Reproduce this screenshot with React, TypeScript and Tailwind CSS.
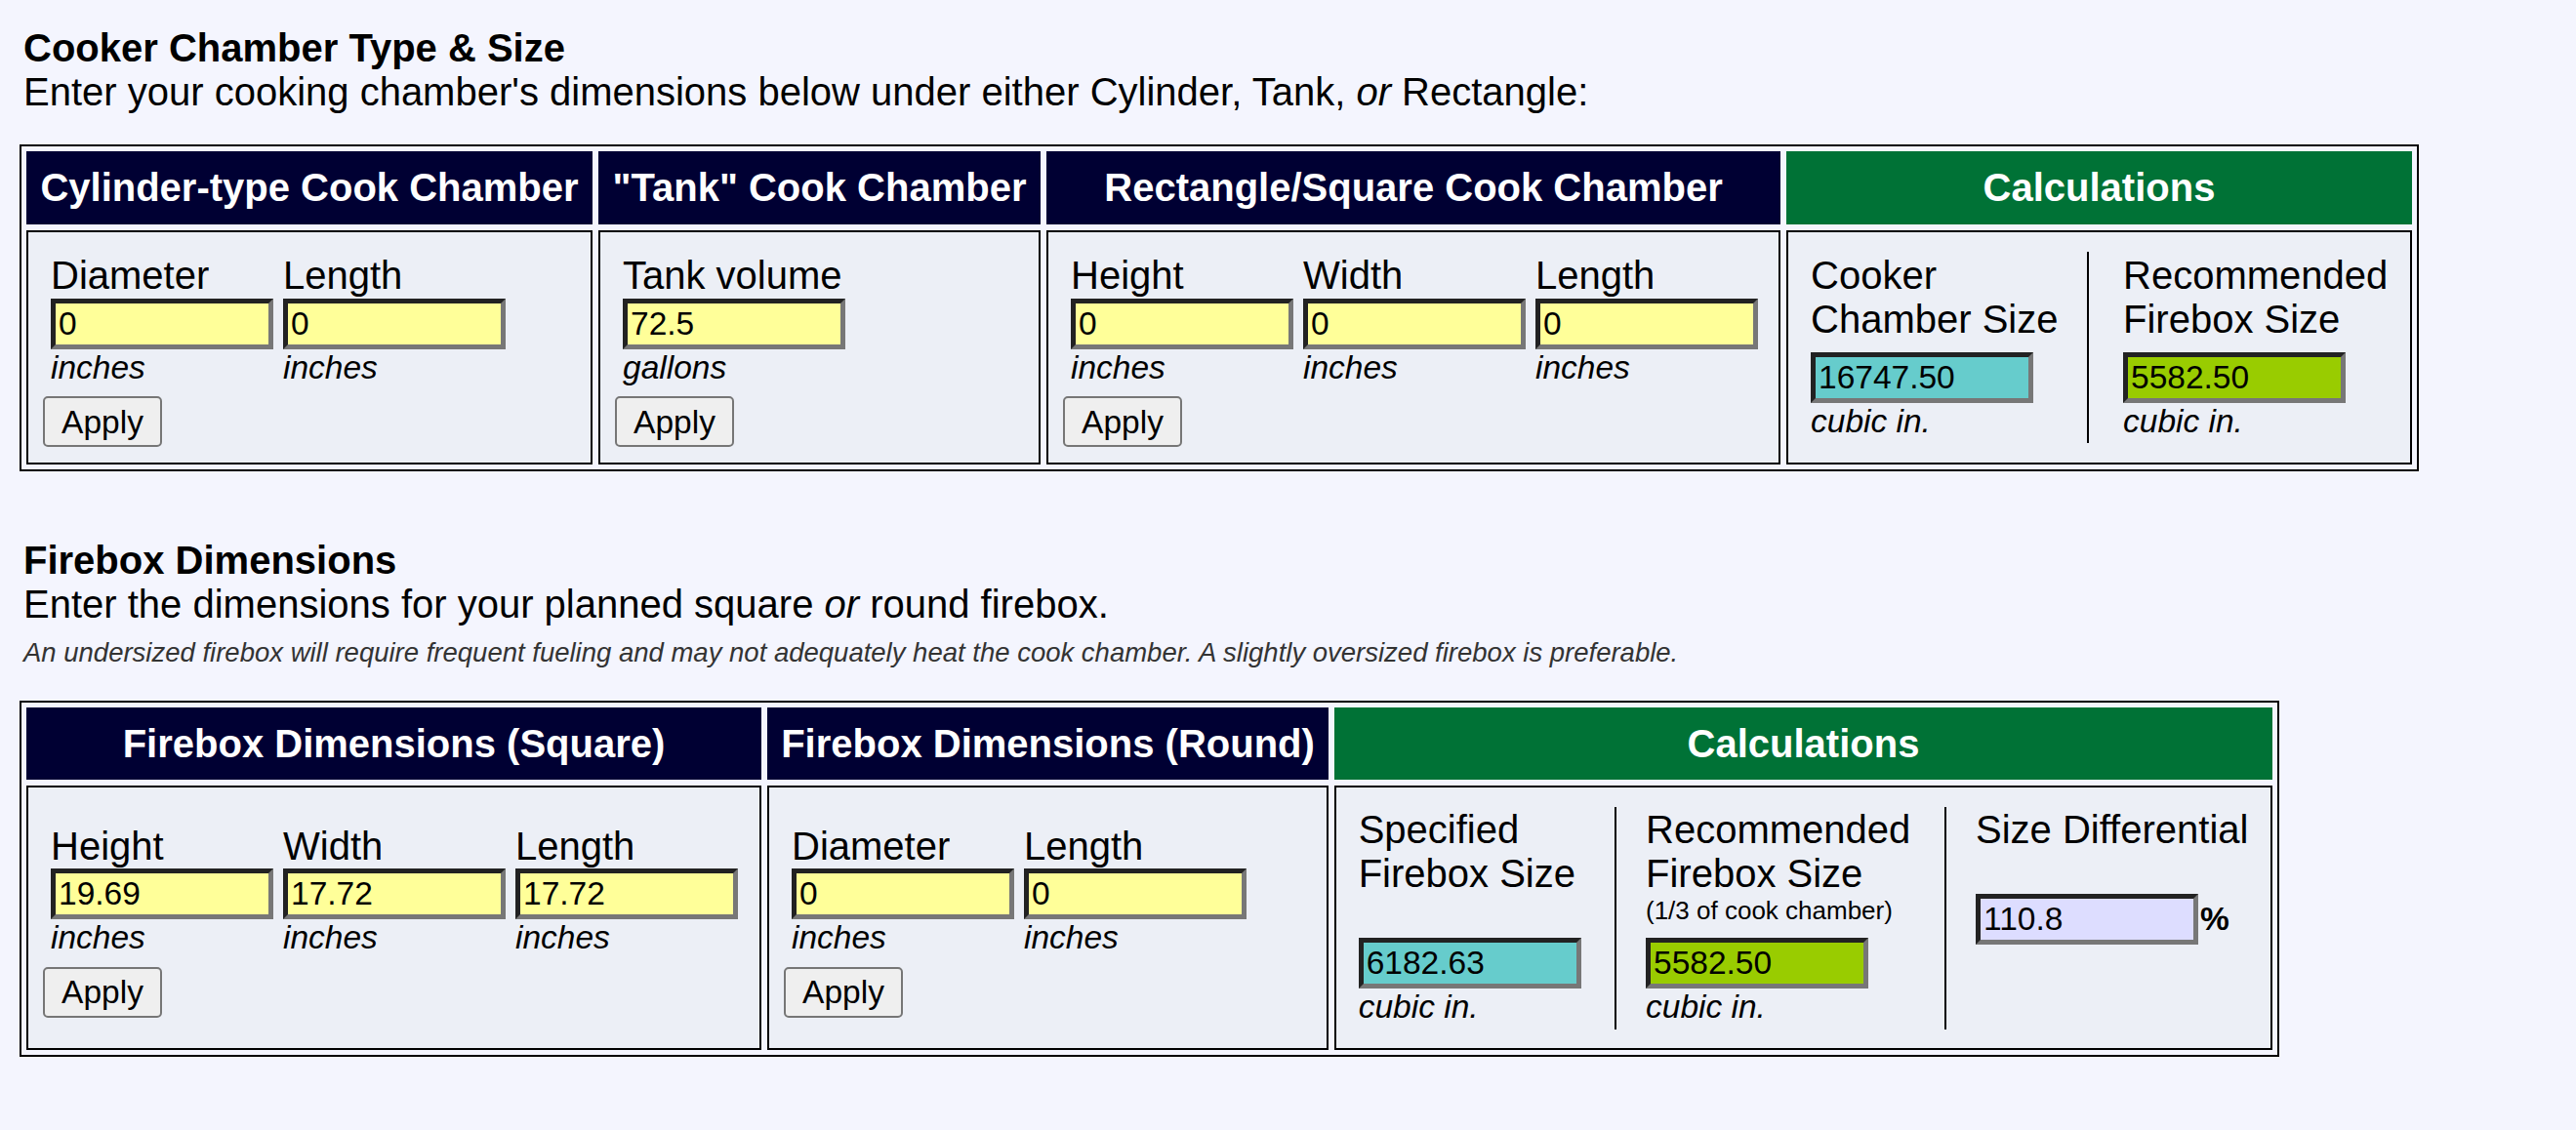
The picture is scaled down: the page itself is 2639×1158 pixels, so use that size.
import React from "react";

const big = "text-[40px] leading-[45.3px]";
const unitCls = "text-[33.5px] leading-[38.5px] italic";
const boxCls =
  "block w-[228px] h-[52px] border-[5px] border-t-[#222] border-l-[#222] border-b-[#777] border-r-[#777] px-[3px] py-0 text-[33.5px] text-black outline-none";

type FieldProps = { label: string; value: string; unit: string };

function Field({ label, value, unit }: FieldProps) {
  return (
    <div className="flex w-[228px] flex-col">
      <div className={big}>{label}</div>
      <input readOnly value={value} className={`${boxCls} bg-[#ffff99]`} />
      <div className={unitCls}>{unit}</div>
    </div>
  );
}

function InputCell({ fields }: { fields: FieldProps[] }) {
  return (
    <div className="h-full border-2 border-black bg-[#eceff6]">
      <div className="flex h-full flex-col justify-center pl-[15px] pt-[6.2px]">
        <div className="ml-[8px] flex gap-[10px]">
          {fields.map((f, i) => (
            <Field key={i} {...f} />
          ))}
        </div>
        <button className="mt-[10px] h-[52px] w-[122px] rounded-[5px] border-2 border-[#767676] bg-[#efefef] text-[33.5px] leading-none text-black">
          Apply
        </button>
      </div>
    </div>
  );
}

function Head({ children, green }: { children: React.ReactNode; green?: boolean }) {
  return (
    <div
      className={`flex items-center justify-center whitespace-nowrap text-[40px] font-bold leading-[45.3px] text-white ${
        green ? "bg-[#007236]" : "bg-[#000033]"
      }`}
    >
      {children}
    </div>
  );
}

export default function App() {
  return (
    <div className="min-h-screen w-full bg-[#f4f5fe] pl-[20px] pt-[27px] font-['Liberation_Sans',Arial,sans-serif] text-black">
      <div className="pl-[4px]">
        <div className={`${big} font-bold`}>Cooker Chamber Type &amp; Size</div>
        <div className={big}>
          Enter your cooking chamber's dimensions below under either Cylinder, Tank, <i>or</i> Rectangle:
        </div>
      </div>

      <div className="mt-[30.7px] w-fit border-2 border-black p-[5px]">
        <div className="grid grid-cols-[580px_453px_752px_641px] grid-rows-[75px_240px] gap-[6px]">
          <Head>Cylinder-type Cook Chamber</Head>
          <Head>"Tank" Cook Chamber</Head>
          <Head>Rectangle/Square Cook Chamber</Head>
          <Head green>Calculations</Head>

          <InputCell
            fields={[
              { label: "Diameter", value: "0", unit: "inches" },
              { label: "Length", value: "0", unit: "inches" },
            ]}
          />
          <InputCell fields={[{ label: "Tank volume", value: "72.5", unit: "gallons" }]} />
          <InputCell
            fields={[
              { label: "Height", value: "0", unit: "inches" },
              { label: "Width", value: "0", unit: "inches" },
              { label: "Length", value: "0", unit: "inches" },
            ]}
          />

          <div className="h-full border-2 border-black bg-[#eceff6]">
            <div className="flex h-full items-center">
              <div className="flex">
                <div className="w-[308px] border-r-2 border-black pb-[2.5px] pl-[23px] pt-[1.5px]">
                  <div className={big}>
                    Cooker
                    <br />
                    Chamber Size
                  </div>
                  <input readOnly value="16747.50" className={`${boxCls} mt-[10.9px] bg-[#66cccc]`} />
                  <div className={unitCls}>cubic in.</div>
                </div>
                <div className="pb-[2.5px] pl-[35px] pt-[1.5px]">
                  <div className={big}>
                    Recommended
                    <br />
                    Firebox Size
                  </div>
                  <input readOnly value="5582.50" className={`${boxCls} mt-[10.9px] bg-[#99cc00]`} />
                  <div className={unitCls}>cubic in.</div>
                </div>
              </div>
            </div>
          </div>
        </div>
      </div>

      <div className="mt-[68.9px] pl-[4px]">
        <div className={`${big} font-bold`}>Firebox Dimensions</div>
        <div className={big}>
          Enter the dimensions for your planned square <i>or</i> round firebox.
        </div>
        <div className="mt-[9.8px] text-[27.5px] leading-[31.6px] italic text-[#333]">
          An undersized firebox will require frequent fueling and may not adequately heat the cook chamber. A slightly
          oversized firebox is preferable.
        </div>
      </div>

      <div className="mt-[34.1px] w-fit border-2 border-black p-[5px]">
        <div className="grid grid-cols-[753px_575px_961px] grid-rows-[74px_271px] gap-[6px]">
          <Head>Firebox Dimensions (Square)</Head>
          <Head>Firebox Dimensions (Round)</Head>
          <Head green>Calculations</Head>

          <InputCell
            fields={[
              { label: "Height", value: "19.69", unit: "inches" },
              { label: "Width", value: "17.72", unit: "inches" },
              { label: "Length", value: "17.72", unit: "inches" },
            ]}
          />
          <InputCell
            fields={[
              { label: "Diameter", value: "0", unit: "inches" },
              { label: "Length", value: "0", unit: "inches" },
            ]}
          />

          <div className="h-full border-2 border-black bg-[#eceff6]">
            <div className="flex h-full items-center">
              <div className="flex">
                <div className="w-[287px] border-r-2 border-black pb-[3.2px] pl-[22.7px] pt-[1.2px]">
                  <div className={big}>
                    Specified
                    <br />
                    Firebox Size
                  </div>
                  <div className="h-[42.2px]" />
                  <input readOnly value="6182.63" className={`${boxCls} bg-[#66cccc]`} />
                  <div className={unitCls}>cubic in.</div>
                </div>
                <div className="w-[338px] border-r-2 border-black pb-[3.2px] pl-[30px] pt-[1.2px]">
                  <div className={big}>
                    Recommended
                    <br />
                    Firebox Size
                  </div>
                  <div className="h-[42.2px] text-[26px] leading-[29.9px]">(1/3 of cook chamber)</div>
                  <input readOnly value="5582.50" className={`${boxCls} bg-[#99cc00]`} />
                  <div className={unitCls}>cubic in.</div>
                </div>
                <div className="pb-[3.2px] pl-[30px] pt-[1.2px]">
                  <div className={big}>Size Differential</div>
                  <div className="h-[42.2px]" />
                  <div className="flex items-end">
                    <input readOnly value="110.8" className={`${boxCls} bg-[#ddddff]`} />
                    <span className="mb-[6.1px] ml-[2px] text-[33.5px] font-bold leading-[38.5px]">%</span>
                  </div>
                </div>
              </div>
            </div>
          </div>
        </div>
      </div>
    </div>
  );
}
